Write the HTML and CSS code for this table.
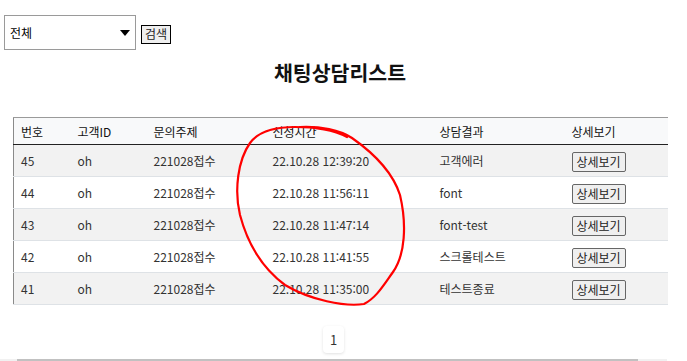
FILE: index.html
```html
<!DOCTYPE html>
<html lang="ko">
<head>
<meta charset="utf-8">
<link rel="stylesheet" href="styles.css">
</head>
<body>
<div class="page">
  <div class="search">
    <div class="select-wrap">
      <select class="select"><option>전체</option></select>
      <span class="select-arrow"></span>
    </div>
    <button class="btn">검색</button>
  </div>
  <h2 class="title">채팅상담리스트</h2>
  <div class="table-wrap">
    <table class="list">
      <colgroup>
        <col style="width:57px"><col style="width:76px"><col style="width:119px"><col style="width:167px"><col style="width:132px"><col style="width:103px">
      </colgroup>
      <thead>
        <tr><th>번호</th><th>고객ID</th><th>문의주제</th><th>신청시간</th><th>상담결과</th><th>상세보기</th></tr>
      </thead>
      <tbody>
        <tr><td>45</td><td>oh</td><td>221028접수</td><td>22.10.28 12:39:20</td><td>고객에러</td><td><button class="btn">상세보기</button></td></tr>
        <tr><td>44</td><td>oh</td><td>221028접수</td><td>22.10.28 11:56:11</td><td>font</td><td><button class="btn">상세보기</button></td></tr>
        <tr><td>43</td><td>oh</td><td>221028접수</td><td>22.10.28 11:47:14</td><td>font-test</td><td><button class="btn">상세보기</button></td></tr>
        <tr><td>42</td><td>oh</td><td>221028접수</td><td>22.10.28 11:41:55</td><td>스크롤테스트</td><td><button class="btn">상세보기</button></td></tr>
        <tr><td>41</td><td>oh</td><td>221028접수</td><td>22.10.28 11:35:00</td><td>테스트종료</td><td><button class="btn">상세보기</button></td></tr>
      </tbody>
    </table>
  </div>
  <div class="pager"><span class="page-item">1</span></div>
  <div class="hscroll"><div class="hscroll-thumb"></div></div>
</div>
<svg class="annot" width="687" height="361" viewBox="0 0 687 361">
  <path d="M 300 127 C 320 126, 340 130, 352 138 C 372 152, 392 170, 400 195 C 407 225, 405 255, 393 272 C 383 286, 376 298, 364 304 C 345 307, 310 300, 285 285 C 262 268, 248 245, 240 215 C 234 190, 238 160, 250 143 C 258 132, 275 127, 295 127 C 315 127, 335 131, 347 137" fill="none" stroke="#ff0000" stroke-width="2.2" stroke-linecap="round"/>
</svg>
</body>
</html>
```
FILE: styles.css
```css
html, body {
  margin: 0;
  padding: 0;
  background: #fff;
  overflow: hidden;
  width: 687px;
  height: 361px;
}
body {
  font-family: "Noto Sans CJK KR", "Noto Sans", sans-serif;
  font-size: 12px;
  color: #333;
  position: relative;
}
.page {
  width: 667px;
}
.search {
  display: flex;
  align-items: center;
  gap: 5px;
  padding: 15px 0 0 4px;
}
.select-wrap {
  position: relative;
  width: 132px;
  height: 35px;
}
.select {
  appearance: none;
  -webkit-appearance: none;
  width: 132px;
  height: 35px;
  box-sizing: border-box;
  border: 1px solid #9a9a9a;
  border-radius: 0;
  background: #fff;
  padding: 0 0 0 5px;
  font-family: inherit;
  font-size: 12px;
  color: #000;
  margin: 0;
}
.select-arrow {
  position: absolute;
  left: 116px;
  top: 15px;
  width: 0;
  height: 0;
  border-left: 5px solid transparent;
  border-right: 5px solid transparent;
  border-top: 6px solid #000;
}
.btn {
  font-family: inherit;
  font-size: 12px;
  font-weight: 400;
  color: #222;
  background: #efefef;
  border: 1px solid #666;
  border-radius: 2px;
  padding: 0 3px;
  height: 20px;
  line-height: 16px;
  margin: 0;
}
.search .btn {
  height: 19px;
  margin-top: 3px;
  border-color: #000;
  border-radius: 0;
}
.title {
  margin: 8px 0 0 13px;
  width: 654px;
  text-align: center;
  font-size: 20.5px;
  font-weight: 700;
  line-height: 28px;
  color: #111;
}
.table-wrap {
  margin: 31px 0 0 13px;
}
.list {
  width: 654px;
  table-layout: fixed;
  border-collapse: collapse;
  border-left: 1px solid #8a8a8a;
  border-top: 1px solid #9a9a9a;
}
.list th {
  text-align: left;
  font-weight: 400;
  color: #111;
  background: #f8f9fa;
  height: 26px;
  padding: 0 7px;
  border-bottom: 1px solid #222;
}
.list td {
  height: 31px;
  padding: 0 7px;
  border-bottom: 1px solid #dee2e6;
  color: #333;
  white-space: nowrap;
}
.list tbody tr:nth-child(odd) td {
  background: #f2f2f2;
}
.list td .btn {
  height: 20px;
  padding: 0 4px;
  margin-top: 2px;
}
.pager {
  display: flex;
  justify-content: center;
  margin-top: 21px;
}
.page-item {
  width: 21px;
  height: 27px;
  line-height: 27px;
  text-align: center;
  font-size: 13px;
  color: #333;
  background: #fff;
  border-radius: 4px;
  box-shadow: 0 1px 3px rgba(0,0,0,0.12);
}
.hscroll {
  margin-top: 6px;
  height: 10px;
  background: #f1f1f1;
  padding-left: 17px;
}
.hscroll-thumb {
  width: 621px;
  height: 10px;
  background: #c1c1c1;
}
.annot {
  position: absolute;
  left: 0;
  top: 0;
  pointer-events: none;
}
```
